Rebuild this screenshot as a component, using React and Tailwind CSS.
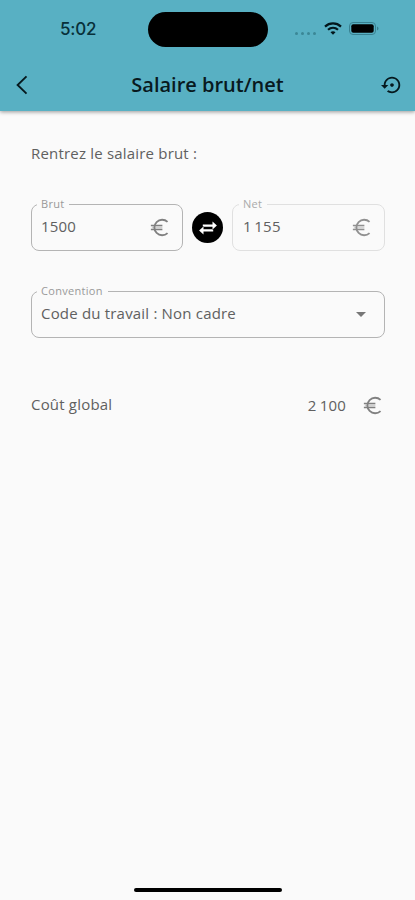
function Euro({ className = "" }) {
  return (
    <svg viewBox="0 0 24 24" className={`h-[23px] w-[23px] shrink-0 ${className}`} fill="none" stroke="currentColor" strokeWidth="1.9">
      <path d="M20.4 6.2A8.1 8.1 0 1 0 20.4 17.8" />
      <path d="M3 10h12M3 14h12" strokeWidth="1.6" />
      <path d="M4 12h11" strokeOpacity=".35" />
    </svg>
  );
}

function Field({ label, value, icon, className, labelClass }) {
  return (
    <fieldset className={`h-[53px] min-w-0 rounded-[8px] border ${className}`}>
      <legend className={`h-3 pl-1 pr-[5px] text-[11px] leading-3 tracking-[0.3px] ${labelClass}`}>{label}</legend>
      <div className="flex h-[33px] items-center justify-between pl-1 text-[15px]">
        <span className="whitespace-pre">{value}</span>
        {icon}
      </div>
    </fieldset>
  );
}

function StatusBar() {
  return (
    <div className="flex h-[58px] items-center pl-[60px]">
      <span className="mt-[2px] w-[88px] font-['Inter'] text-[17px] font-medium tracking-[-0.2px] text-[#08303a]">5:02</span>
      <div className="h-[35px] w-[120px] rounded-full bg-black" />
      <div className="ml-[27px] mt-[8px] flex gap-[3px]">
        <i className="h-[3px] w-[3px] rounded-full bg-[#3b8796]" />
        <i className="h-[3px] w-[3px] rounded-full bg-[#3b8796]" />
        <i className="h-[3px] w-[3px] rounded-full bg-[#3b8796]" />
        <i className="h-[3px] w-[3px] rounded-full bg-[#3b8796]" />
      </div>
      <svg viewBox="0 0 18 13" className="ml-[8px] -mt-[2px] h-[13px] w-[18px]" fill="none" stroke="#03161b" strokeWidth="2.2">
        <path d="M1 4.6C5.6.4 12.4.4 17 4.6" />
        <path d="M4 7.8c2.9-2.6 7.1-2.6 10 0" />
        <path d="M6.5 10.2c1.5-1.3 3.5-1.3 5 0L9 12.8z" fill="#03161b" stroke="none" />
      </svg>
      <svg viewBox="0 0 30 13" className="ml-[7px] -mt-[1px] h-[13px] w-[30px]">
        <rect x=".5" y=".5" width="26" height="12" rx="3.5" fill="none" stroke="#388090" />
        <rect x="2.3" y="2.3" width="22.4" height="8.4" rx="2" fill="#000" />
        <path d="M28 4.5c2 .8 2 3.2 0 4z" fill="#388090" />
      </svg>
    </div>
  );
}

export default function App() {
  return (
    <div className="flex h-[900px] w-[415px] flex-col overflow-hidden bg-[#fafafa] font-['Open_Sans',sans-serif] font-normal tracking-[0.19px] text-[#606060]">
      <header className="h-[111px] shrink-0 bg-[#58b0c3] tracking-normal shadow-[0_1px_4px_rgba(0,0,0,0.4)]">
        <StatusBar />
        <div className="flex h-[53px] items-center pl-[15px] pr-[12px]">
          <svg viewBox="0 0 14 20" className="h-5 w-[14px]" fill="none" stroke="#06191e" strokeWidth="1.9">
            <path d="M11.5 1.4 2.6 10l8.9 8.6" />
          </svg>
          <h1 className="flex-1 pl-[5px] text-center text-[20px] font-semibold text-[#08191e]">Salaire brut/net</h1>
          <svg viewBox="0 0 24 24" className="h-[22px] w-[22px]" fill="#06191e">
            <path d="M14 12c0-1.1-.9-2-2-2s-2 .9-2 2 .9 2 2 2 2-.9 2-2zm-2-9c-4.97 0-9 4.03-9 9H0l4 4 4-4H5c0-3.87 3.13-7 7-7s7 3.13 7 7-3.13 7-7 7c-1.51 0-2.91-.49-4.06-1.3l-1.42 1.44C8.04 20.3 9.94 21 12 21c4.97 0 9-4.03 9-9s-4.03-9-9-9z" />
          </svg>
        </div>
      </header>
      <main className="flex-1 pl-[31px] pr-[30px] pt-[32px]">
        <p className="h-[55px] text-[15px] leading-[20px]">Rentrez le salaire brut :</p>
        <div className="flex items-start justify-between">
          <Field label="Brut" value="1500" className="w-[152px] border-[#b4b4b4] pl-[5px] pr-[11px]" labelClass="text-[#999]" icon={<Euro className="mt-px text-[#808080]" />} />
          <div className="mt-[14px] flex h-[31px] w-[31px] items-center justify-center rounded-full bg-black">
            <svg viewBox="0 0 20 18" className="h-[18px] w-5" fill="none" stroke="#fff" strokeWidth="2.4">
              <path d="M6 7.6V6.6h9M14 10.4v1H5" />
              <path d="m14.5 2.6 4.4 4-4.4 4zM5.5 7.4l-4.4 4 4.4 4z" fill="#fff" stroke="none" />
            </svg>
          </div>
          <Field label="Net" value="1 155" className="w-[153px] border-[#e0e0e0] pl-[6px] pr-[11px] [word-spacing:-1.5px]" labelClass="text-[#aaa]" icon={<Euro className="mt-px text-[#909090]" />} />
        </div>
        <div className="mt-[34px]">
          <Field
            label="Convention"
            value="Code du travail : Non cadre"
            className="w-[354px] border-[#b4b4b4] pl-[5px] pr-[18px]"
            labelClass="text-[#999]"
            icon={<svg viewBox="0 0 10 5" className="mt-[2px] h-[5px] w-[10px]" fill="#777"><path d="M0 0h10L5 5z" /></svg>}
          />
        </div>
        <div className="mt-[55px] flex h-[24px] items-center text-[15px]">
          <span className="-mt-[2px] flex-1">Coût global</span>
          <span className="[word-spacing:-1px]">2 100</span>
          <Euro className="ml-[15px] mr-px text-[#808080]" />
        </div>
      </main>
      <footer className="flex h-[12px] shrink-0 justify-center">
        <div className="h-[4px] w-[148px] rounded-full bg-black" />
      </footer>
    </div>
  );
}
